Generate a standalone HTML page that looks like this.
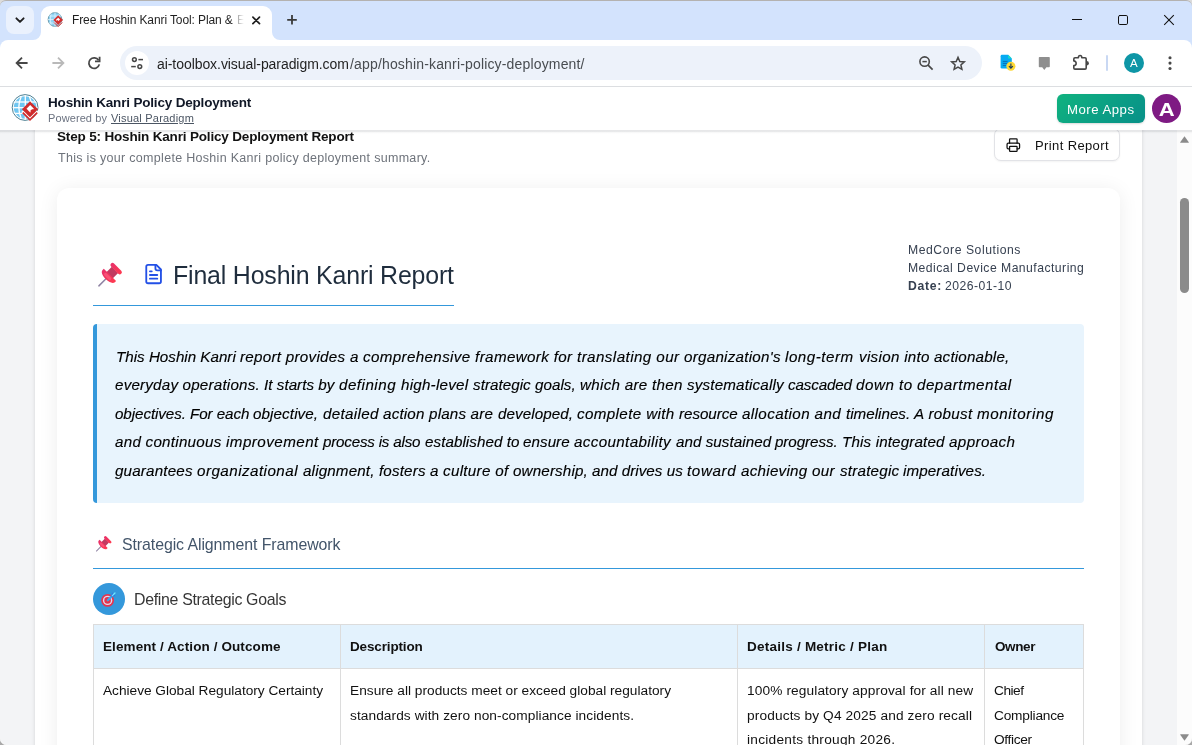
<!DOCTYPE html>
<html>
<head>
<meta charset="utf-8">
<title>Hoshin Kanri Policy Deployment</title>
<style>
*{box-sizing:border-box;margin:0;padding:0}
html,body{width:1192px;height:745px;overflow:hidden;background:#fff}
body{font-family:"Liberation Sans",sans-serif;position:relative;color:#111}
.abs{position:absolute}
.t{position:absolute;white-space:nowrap;line-height:1;will-change:transform}
svg{position:absolute;overflow:visible}
.pi{font-size:15.2px;font-style:italic;color:#000;-webkit-text-stroke:0.15px #000}
/* chrome */
#tabstrip{left:0;top:0;width:1192px;height:52px;background:#d3e3fd;border-top:1px solid #b4b2b0;border-radius:6px 6px 0 0}
.wc{position:absolute;width:7px;height:7px;background:#dcdcdc}
#tab{left:41px;top:6px;width:231px;height:34px;background:#fff;border-radius:9px 9px 0 0}
#tabmenu{left:6px;top:6px;width:28px;height:28px;border-radius:8px;background:#eaf1fd}
#toolbar{left:0;top:40px;width:1192px;height:46px;background:#fff;border-radius:8px 8px 0 0}
#omni{left:120px;top:46px;width:862px;height:34px;border-radius:17px;background:#edf2fa}
#chip{left:125px;top:51px;width:24px;height:24px;border-radius:12px;background:#fff}
#tbline{left:0;top:86px;width:1192px;height:1px;background:#dcdee1}
#tabfade{left:231px;top:10px;width:16px;height:20px;background:linear-gradient(90deg,rgba(255,255,255,0) 0,rgba(255,255,255,.25) 25%,#fff 80%)}
#sep{left:1106px;top:55px;width:2px;height:16px;background:#c9d8f3;border-radius:1px}
#avatar{left:1124px;top:53px;width:20px;height:20px;border-radius:10px;background:#0e96a6}
/* app header */
#hdr{left:0;top:87px;width:1192px;height:43px;background:#fff;z-index:5}
#hsh{left:0;top:130px;width:1192px;height:4px;z-index:5;background:linear-gradient(180deg,rgba(17,24,39,.105) 0,rgba(17,24,39,.10) 1px,rgba(17,24,39,.095) 1px,rgba(17,24,39,.09) 2px,rgba(17,24,39,.035) 2px,rgba(17,24,39,.03) 3px,rgba(17,24,39,.01) 3px,rgba(17,24,39,0) 4px)}
#more{left:1057px;top:94px;width:88px;height:29px;border-radius:6px;background:linear-gradient(135deg,#10b27f 0%,#0a9a86 70%,#089088 100%);box-shadow:0 1px 2px rgba(0,0,0,.15);z-index:6}
#uav{left:1152px;top:94px;width:29px;height:29px;border-radius:50%;background:#7e1a83;z-index:6}
/* content */
#content{left:0;top:130px;width:1177px;height:615px;background:#f3f4f6;overflow:hidden}
#cont{left:35px;top:-20px;width:1107px;height:700px;background:#fff;box-shadow:0 0 4px rgba(0,0,0,.13)}
#card{left:57px;top:58px;width:1063px;height:640px;background:#fff;border-radius:12px 12px 0 0;box-shadow:0 2px 20px rgba(0,0,0,.075)}
#printbtn{left:994px;top:128px;width:126px;height:33px;border:1px solid #e2e3e7;border-radius:7px;background:#fff;box-shadow:0 1px 2px rgba(0,0,0,.05)}
#sb{left:1177px;top:130px;width:15px;height:615px;background:#fcfcfc}
#thumb{left:1180px;top:198px;width:9px;height:95px;border-radius:4.5px;background:#8b8b8b}
#tline{left:93px;top:305px;width:361px;height:1px;background:#3498db}
#sum{left:93px;top:324px;width:991px;height:179px;background:#e8f4fd;border-left:4px solid #3498db;border-radius:4px}
#secline{left:93px;top:568px;width:991px;height:1px;background:#3498db}
#circ{left:93px;top:583px;width:32px;height:32px;border-radius:50%;background:#3498db}
#tbl{left:93px;top:624px;width:991px;height:140px;border:1px solid #dcdcdc;background:#fff}
#thead{left:94px;top:625px;width:989px;height:43px;background:#e3f2fd}
.vl{position:absolute;top:624px;width:1px;height:130px;background:#dcdcdc}
#hl{left:93px;top:668px;width:991px;height:1px;background:#dcdcdc}
</style>
</head>
<body>
<!-- Chrome tab strip -->
<div class="wc" style="left:0;top:0"></div><div class="wc" style="left:1185px;top:0"></div>
<div id="tabstrip" class="abs"></div>

<div id="tabmenu" class="abs"></div>
<div id="toolbar" class="abs"></div>
<div id="tab" class="abs"></div>
<!-- tab flares -->
<svg style="left:33px;top:32px" width="8" height="8" viewBox="0 0 8 8"><path d="M8 0 V8 H0 A8 8 0 0 0 8 0Z" fill="#fff"/></svg>
<svg style="left:272px;top:32px" width="8" height="8" viewBox="0 0 8 8"><path d="M0 0 V8 H8 A8 8 0 0 1 0 0Z" fill="#fff"/></svg>
<div id="omni" class="abs"></div>
<div id="chip" class="abs"></div>
<div id="tbline" class="abs"></div>
<!-- tab menu chevron -->
<svg style="left:0;top:0" width="1192" height="87" viewBox="0 0 1192 87" fill="none" stroke-linecap="round" stroke-linejoin="round">
  <path d="M16.4 18.3 L20 21.9 L23.6 18.3" stroke="#1f1f1f" stroke-width="1.9"/>
  <!-- favicon -->
  <g>
    <circle cx="55" cy="19.5" r="6.9" fill="#8fd3f4" stroke="#5a8da0" stroke-width="0.8"/>
    <path d="M48.3 19.5 H61.7 M55 12.7 V26.3 M51 14 Q49.5 19.5 51 25 M59 14 Q60.5 19.5 59 25 M49.3 16 H60.7 M49.3 23 H60.7" stroke="#e8f6fd" stroke-width="0.7"/>
    <path d="M58.2 15.3 L63 20.1 L58.2 24.9 L53.4 20.1Z" fill="#d32f2f" stroke="none"/>
    <path d="M54.4 22.8 L58.2 26.6 L62 22.8" stroke="#d32f2f" stroke-width="1"/>
    <path d="M58.2 17.8 L60 19.6 L58.6 21 L57.4 19.9 L56.6 20.7 L55.8 19.9Z" fill="#fff" stroke="none"/>
  </g>
  <!-- tab close -->
  <path d="M252.9 17.1 L259.5 23.7 M259.5 17.1 L252.9 23.7" stroke="#1f1f1f" stroke-width="1.7"/>
  <!-- new tab -->
  <path d="M287.2 19.8 H296.8 M292 15 V24.6" stroke="#3a3a3a" stroke-width="1.8" stroke-linecap="butt"/>
  <!-- window controls -->
  <path d="M1072 19.5 H1082" stroke="#111" stroke-width="1" stroke-linecap="butt"/>
  <rect x="1118.5" y="15.5" width="9" height="9" rx="1.3" stroke="#111" stroke-width="1"/>
  <path d="M1164.2 15.2 L1173.8 24.8 M1173.8 15.2 L1164.2 24.8" stroke="#111" stroke-width="1.05" stroke-linecap="butt"/>
  <!-- back -->
  <path d="M27.6 63 H17.2 M22 57.6 L16.6 63 L22 68.4" stroke="#474747" stroke-width="1.8" stroke-linecap="butt" stroke-linejoin="miter"/>
  <!-- forward -->
  <path d="M52.4 63 H62.8 M58 57.6 L63.4 63 L58 68.4" stroke="#b9b9b9" stroke-width="1.8" stroke-linecap="butt" stroke-linejoin="miter"/>
  <!-- reload -->
  <path d="M98.6 60.2 A5.3 5.3 0 1 0 99.3 64.4" stroke="#474747" stroke-width="1.8" stroke-linecap="butt"/>
  <path d="M99.6 56.8 V61.4 H95" stroke="#474747" stroke-width="1.8" stroke-linecap="butt" stroke-linejoin="miter"/>
  <!-- tune -->
  <circle cx="134.4" cy="59.6" r="1.9" stroke="#474747" stroke-width="1.5"/>
  <path d="M138.4 59.6 H143" stroke="#474747" stroke-width="1.5" stroke-linecap="butt"/>
  <circle cx="139.8" cy="66.6" r="1.9" stroke="#474747" stroke-width="1.5"/>
  <path d="M131.2 66.6 H135.8" stroke="#474747" stroke-width="1.5" stroke-linecap="butt"/>
  <!-- zoom -->
  <circle cx="924.6" cy="61.6" r="4.7" stroke="#474747" stroke-width="1.6"/>
  <path d="M922.4 61.6 H926.8" stroke="#474747" stroke-width="1.5" stroke-linecap="butt"/>
  <path d="M928.1 65.1 L932.6 69.6" stroke="#474747" stroke-width="1.7" stroke-linecap="butt"/>
  <!-- star -->
  <path d="M958 57.3 L959.8 61.5 L964.3 61.9 L960.9 64.9 L961.9 69.3 L958 67 L954.1 69.3 L955.1 64.9 L951.7 61.9 L956.2 61.5Z" stroke="#474747" stroke-width="1.5" stroke-linejoin="miter"/>
  <!-- ext doc icon -->
  <path d="M1002 54.8 H1008.2 L1011.8 58.4 V67.2 Q1011.8 68.6 1010.4 68.6 H1002 Q1000.6 68.6 1000.6 67.2 V56.2 Q1000.6 54.8 1002 54.8Z" fill="#06aaf2" stroke="none"/>
  <path d="M1008.2 54.8 L1011.8 58.4 H1008.2Z" fill="#19dfc6" stroke="none"/>
  <path d="M1002.8 61.4 H1007.6 M1002.8 63.4 H1007.6 M1002.8 65.4 H1006" stroke="#0a6fb5" stroke-width="1" stroke-linecap="butt"/>
  <circle cx="1010.9" cy="66.2" r="4.5" fill="#fdd835" stroke="none"/>
  <path d="M1010.9 63.6 V68 M1008.9 66.2 L1010.9 68.2 L1012.9 66.2" stroke="#1a3a5a" stroke-width="1.1" stroke-linecap="butt" stroke-linejoin="miter"/>
  <!-- speech bubble gray -->
  <path d="M1039.6 57 H1049 Q1049.8 57 1049.8 57.8 V66.4 Q1049.8 67.2 1049 67.2 H1046.4 L1044.3 69.9 L1042.2 67.2 H1039.6 Q1038.8 67.2 1038.8 66.4 V57.8 Q1038.8 57 1039.6 57Z" fill="#8e8e8e" stroke="none"/>
  <!-- puzzle -->
  <path d="M1075 57.7 H1078.4 A1.7 2.2 0 0 1 1081.8 57.7 H1085 Q1086.2 57.7 1086.2 58.9 V67.9 Q1086.2 69.1 1085 69.1 H1075 Q1073.8 69.1 1073.8 67.9 V65.6 A2.35 2.35 0 0 0 1073.8 60.9 V58.9 Q1073.8 57.7 1075 57.7Z" stroke="#474747" stroke-width="1.6" stroke-linejoin="round"/>
  <path d="M1086.6 60.9 A2.3 2.3 0 0 1 1086.6 65.5Z" fill="#474747" stroke="none"/>
  <!-- kebab -->
  <circle cx="1170" cy="57.7" r="1.55" fill="#474747"/><circle cx="1170" cy="63.1" r="1.55" fill="#474747"/><circle cx="1170" cy="68.5" r="1.55" fill="#474747"/>
</svg>
<div id="sep" class="abs"></div>
<div id="avatar" class="abs"></div>
<div class="t" style="left:1130.1px;top:57.6px;font-size:11.5px;color:#fff">A</div>


<!-- content -->
<div id="content" class="abs">
  <div id="cont" class="abs"></div>
  <div id="card" class="abs"></div>
</div>
<div id="sb" class="abs"></div>
<div id="thumb" class="abs"></div>
<svg style="left:1180px;top:136px" width="9" height="7" viewBox="0 0 9 7"><path d="M4.5 0.3 L8.8 6.2 Q9 6.8 8.3 6.8 H0.7 Q0 6.8 0.2 6.2Z" fill="#8b8b8b"/></svg>
<svg style="left:1180px;top:734px" width="9" height="7" viewBox="0 0 9 7"><path d="M4.5 6.7 L8.8 0.8 Q9 0.2 8.3 0.2 H0.7 Q0 0.2 0.2 0.8Z" fill="#8b8b8b"/></svg>

<div id="printbtn" class="abs"></div>
<div id="tline" class="abs"></div>
<div id="sum" class="abs"></div>
<div id="secline" class="abs"></div>
<div id="circ" class="abs"></div>
<div id="tbl" class="abs"></div>
<div id="thead" class="abs"></div>
<div class="vl" style="left:340px"></div>
<div class="vl" style="left:737px"></div>
<div class="vl" style="left:984px"></div>
<div id="hl" class="abs"></div>
<svg style="left:0;top:0" width="1192" height="745" viewBox="0 0 1192 745" fill="none">
  <defs>
    <linearGradient id="pg1" x1="0" y1="0" x2="1" y2="0"><stop offset="0" stop-color="#e62e6e"/><stop offset="0.55" stop-color="#ff5c80"/><stop offset="1" stop-color="#f23a5c"/></linearGradient>
    <linearGradient id="pg2" x1="0" y1="0" x2="0" y2="1"><stop offset="0" stop-color="#e8306a"/><stop offset="1" stop-color="#ff3a50"/></linearGradient>
    
  </defs>
  <!-- big pin -->
  <g transform="translate(98.4,286.4) rotate(-45)">
      <rect x="0" y="-0.75" width="12.5" height="1.5" rx="0.7" fill="#8f84a4"/>
      <rect x="15" y="-4.4" width="8.5" height="8.8" fill="#c23a60"/>
      <path d="M16.3 -8.7 V8.7 H14.6 C11.6 8.7 10.3 4 10.3 0 C10.3 -4 11.6 -8.7 14.6 -8.7Z" fill="url(#pg2)"/>
      <rect x="12" y="-5" width="3" height="9" rx="1.5" fill="#ff6a8a" opacity=".55"/>
      <rect x="23" y="-7.2" width="4.2" height="14.4" rx="2.1" fill="url(#pg2)"/>
    </g>
  <!-- small pin -->
  <g transform="translate(96.1,551.4) rotate(-45) scale(0.655)">
      <rect x="0" y="-0.75" width="12.5" height="1.5" rx="0.7" fill="#8f84a4"/>
      <rect x="15" y="-4.4" width="8.5" height="8.8" fill="#c23a60"/>
      <path d="M16.3 -8.7 V8.7 H14.6 C11.6 8.7 10.3 4 10.3 0 C10.3 -4 11.6 -8.7 14.6 -8.7Z" fill="url(#pg2)"/>
      <rect x="12" y="-5" width="3" height="9" rx="1.5" fill="#ff6a8a" opacity=".55"/>
      <rect x="23" y="-7.2" width="4.2" height="14.4" rx="2.1" fill="url(#pg2)"/>
    </g>
  <!-- doc icon -->
  <g transform="translate(142.6,263.1) scale(0.9167)" stroke="#2350e6" stroke-width="2" stroke-linecap="round" stroke-linejoin="round">
    <path d="M15 2H6a2 2 0 0 0-2 2v16a2 2 0 0 0 2 2h12a2 2 0 0 0 2-2V7Z"/><path d="M14 2v4a2 2 0 0 0 2 2h4"/><path d="M10 9H8"/><path d="M16 13H8"/><path d="M16 17H8"/>
  </g>
  <!-- printer -->
  <g transform="translate(1005.8,137.5) scale(0.627)" stroke="#111" stroke-width="2" stroke-linecap="round" stroke-linejoin="round">
    <path d="M6 18H4a2 2 0 0 1-2-2v-5a2 2 0 0 1 2-2h16a2 2 0 0 1 2 2v5a2 2 0 0 1-2 2h-2"/><path d="M6 9V3a1 1 0 0 1 1-1h10a1 1 0 0 1 1 1v6"/><rect x="6" y="14" width="12" height="8" rx="1"/>
  </g>
  <!-- target emoji -->
  <g>
    <circle cx="107.6" cy="600.4" r="6.4" fill="#e6344e"/>
    <circle cx="107.6" cy="600.4" r="4.7" fill="#dcdcf0"/>
    <circle cx="107.6" cy="600.4" r="3.3" fill="#e6344e"/>
    <circle cx="107.6" cy="600.4" r="0.9" fill="#a798a8"/>
    <path d="M108 600 L111.6 596.4" stroke="#3aa6ee" stroke-width="2.2" stroke-linecap="round"/>
    <path d="M111.2 596.8 L112 592.6 L113.4 594.6 Z" fill="#2f6fe0"/>
    <path d="M111.2 596.8 L115.4 596 L113.4 594.6 Z" fill="#2f6fe0"/>
    <path d="M112.4 595.6 L115 593" stroke="#6fe6ff" stroke-width="1.3" stroke-linecap="round"/>
  </g>
</svg>


<!-- app header -->
<div id="hdr" class="abs"></div>
<div id="hsh" class="abs"></div>
<div id="more" class="abs"></div>
<div id="uav" class="abs"></div>
<svg style="left:0;top:87px;z-index:6" width="60" height="43" viewBox="0 87 60 43" fill="none">
  <circle cx="25.1" cy="107.5" r="12.9" fill="#fff" stroke="#4d7f92" stroke-width="1"/>
  <circle cx="25.1" cy="107.5" r="11.3" fill="#6fc6f1"/>
  <g stroke="#fff" stroke-width="1.3">
    <path d="M13 107.7 H37.4"/>
    <path d="M14.5 102 H35.7"/>
    <path d="M14.5 113.4 H35.7"/>
    <path d="M25.3 95.5 V119.5"/>
    <path d="M21.3 96.3 Q16.3 107.5 21.3 118.7"/>
    <path d="M29.3 96.3 Q34.3 107.5 29.3 118.7"/>
  </g>
  <!-- red diamond -->
  <path d="M22.2 111.2 L30 118.9 L37.8 111.2" stroke="#fff" stroke-width="2.4"/>
  <path d="M30 101.3 L38.1 109.3 L30 117.3 L21.9 109.3Z" fill="#d02b2b"/>
  <path d="M22.8 112.6 L30 119.8 L37.2 112.6" stroke="#d02b2b" stroke-width="1.7"/>
  <!-- white P-ish shape -->
  <path d="M30.2 105.1 L33.9 108.8 L30.2 112.5 L26.5 108.8Z" fill="#fff"/>
  <path d="M32.3 108.9 L34.2 110.8 L32 113 L30.1 111.1Z" fill="#d02b2b"/>
</svg>
<div class="t" style="left:1159.9px;top:101.2px;font-size:18.4px;font-weight:700;color:#fff;z-index:7;transform:scaleX(1.2);transform-origin:50% 50%">A</div>


<div class="t" id="t-tabt" style="left:72.20px;top:13.74px;font-size:12px;color:#1f1f1f;letter-spacing:-0.103px;">Free Hoshin Kanri Tool: Plan &amp;</div>
<div class="t" id="t-url1" style="left:157.00px;top:56.55px;font-size:14px;color:#1f1f1f;letter-spacing:-0.065px;">ai-toolbox.visual-paradigm.com</div>
<div class="t" id="t-url2" style="left:350.00px;top:56.55px;font-size:14px;color:#484c50;letter-spacing:0.163px;">/app/hoshin-kanri-policy-deployment/</div>
<div class="t" id="t-h1" style="left:47.90px;top:95.77px;font-size:13.5px;color:#111827;letter-spacing:-0.182px;font-weight:700;z-index:6;">Hoshin Kanri Policy Deployment</div>
<div class="t" id="t-h2a" style="left:47.90px;top:112.99px;font-size:11px;color:#6b7280;letter-spacing:0.09px;z-index:6;">Powered by</div>
<div class="t" id="t-h2b" style="left:110.50px;top:112.99px;font-size:11px;color:#4b5563;letter-spacing:0.207px;z-index:6;text-decoration:underline;">Visual Paradigm</div>
<div class="t" id="t-more" style="left:1066.50px;top:102.83px;font-size:13.2px;color:#fff;letter-spacing:0.5px;z-index:7;">More Apps</div>
<div class="t" id="t-s1" style="left:56.50px;top:130.07px;font-size:13.5px;color:#111;letter-spacing:-0.17px;font-weight:700;">Step 5: Hoshin Kanri Policy Deployment Report</div>
<div class="t" id="t-s2" style="left:57.50px;top:151.52px;font-size:12.5px;color:#6e737b;letter-spacing:0.302px;">This is your complete Hoshin Kanri policy deployment summary.</div>
<div class="t" id="t-pr" style="left:1034.60px;top:138.90px;font-size:13px;color:#111;letter-spacing:0.381px;">Print Report</div>
<div class="t" id="t-ttl" style="left:173.10px;top:263.32px;font-size:24.9px;color:#1f2d3d;letter-spacing:-0.167px;">Final Hoshin Kanri Report</div>
<div class="t" id="t-m1" style="left:908.00px;top:243.87px;font-size:12.2px;color:#374151;letter-spacing:0.55px;">MedCore Solutions</div>
<div class="t" id="t-m2" style="left:908.00px;top:261.97px;font-size:12.2px;color:#374151;letter-spacing:0.466px;">Medical Device Manufacturing</div>
<div class="t" id="t-m3a" style="left:908.00px;top:279.87px;font-size:12.2px;color:#374151;letter-spacing:0.7px;font-weight:700;">Date:</div>
<div class="t" id="t-m3b" style="left:945.30px;top:279.87px;font-size:12.2px;color:#374151;letter-spacing:0.478px;">2026-01-10</div>
<div class="t" id="t-sec" style="left:121.60px;top:537.04px;font-size:15.9px;color:#43556a;letter-spacing:-0.083px;">Strategic Alignment Framework</div>
<div class="t" id="t-def" style="left:133.70px;top:592.04px;font-size:15.9px;color:#363636;letter-spacing:-0.315px;">Define Strategic Goals</div>
<div class="t" id="t-th1" style="left:102.90px;top:639.57px;font-size:13.5px;color:#111;letter-spacing:0.1px;font-weight:700;">Element / Action / Outcome</div>
<div class="t" id="t-th2" style="left:349.50px;top:639.57px;font-size:13.5px;color:#111;letter-spacing:-0.15px;font-weight:700;">Description</div>
<div class="t" id="t-th3" style="left:747.10px;top:639.57px;font-size:13.5px;color:#111;letter-spacing:0.236px;font-weight:700;">Details / Metric / Plan</div>
<div class="t" id="t-th4" style="left:995.20px;top:639.57px;font-size:13.5px;color:#111;letter-spacing:-0.4px;font-weight:700;">Owner</div>
<div class="t" id="t-r1" style="left:103.10px;top:683.60px;font-size:13.7px;color:#111;letter-spacing:-0.017px;">Achieve Global Regulatory Certainty</div>
<div class="t" id="t-r2a" style="left:349.50px;top:683.60px;font-size:13.7px;color:#111;letter-spacing:0.014px;">Ensure all products meet or exceed global regulatory</div>
<div class="t" id="t-r2b" style="left:349.50px;top:709.10px;font-size:13.7px;color:#111;letter-spacing:0.074px;">standards with zero non-compliance incidents.</div>
<div class="t" id="t-r3a" style="left:747.10px;top:683.60px;font-size:13.7px;color:#111;letter-spacing:0.114px;">100% regulatory approval for all new</div>
<div class="t" id="t-r3b" style="left:747.10px;top:709.10px;font-size:13.7px;color:#111;letter-spacing:0.129px;">products by Q4 2025 and zero recall</div>
<div class="t" id="t-r3c" style="left:747.10px;top:733.20px;font-size:13.7px;color:#111;letter-spacing:0.258px;">incidents through 2026.</div>
<div class="t" id="t-r4a" style="left:994.20px;top:683.60px;font-size:13.7px;color:#111;letter-spacing:-0.5px;">Chief</div>
<div class="t" id="t-r4b" style="left:994.20px;top:709.10px;font-size:13.7px;color:#111;letter-spacing:-0.201px;">Compliance</div>
<div class="t" id="t-r4c" style="left:994.20px;top:733.20px;font-size:13.7px;color:#111;letter-spacing:-0.317px;">Officer</div>
<div class="t pi" id="t-p1-0" style="left:115.80px;top:348.93px;letter-spacing:-0.005px">This Hoshin Kanri</div>
<div class="t pi" id="t-p1-1" style="left:239.80px;top:348.93px;letter-spacing:0.273px">report provides a</div>
<div class="t pi" id="t-p1-2" style="left:362.90px;top:348.93px;letter-spacing:0.351px">comprehensive framework for</div>
<div class="t pi" id="t-p1-3" style="left:577.00px;top:348.93px;letter-spacing:0.421px">translating our</div>
<div class="t pi" id="t-p1-4" style="left:684.20px;top:348.93px;letter-spacing:0.249px">organization's</div>
<div class="t pi" id="t-p1-5" style="left:785.40px;top:348.93px;letter-spacing:0.512px">long-term</div>
<div class="t pi" id="t-p1-6" style="left:858.90px;top:348.93px;letter-spacing:0.303px">vision into</div>
<div class="t pi" id="t-p1-7" style="left:934.30px;top:348.93px;letter-spacing:0.176px">actionable,</div>
<div class="t pi" id="t-p2-0" style="left:115.00px;top:377.43px;letter-spacing:0.194px">everyday operations.</div>
<div class="t pi" id="t-p2-1" style="left:264.30px;top:377.43px;letter-spacing:0.032px">It starts by</div>
<div class="t pi" id="t-p2-2" style="left:339.00px;top:377.43px;letter-spacing:0.486px">defining</div>
<div class="t pi" id="t-p2-3" style="left:400.80px;top:377.43px;letter-spacing:0.224px">high-level</div>
<div class="t pi" id="t-p2-4" style="left:472.50px;top:377.43px;letter-spacing:0.037px">strategic goals,</div>
<div class="t pi" id="t-p2-5" style="left:579.50px;top:377.43px;letter-spacing:0.28px">which are then</div>
<div class="t pi" id="t-p2-6" style="left:686.70px;top:377.43px;letter-spacing:0.163px">systematically</div>
<div class="t pi" id="t-p2-7" style="left:787.90px;top:377.43px;letter-spacing:-0.137px">cascaded</div>
<div class="t pi" id="t-p2-8" style="left:855.90px;top:377.43px;letter-spacing:0.51px">down to</div>
<div class="t pi" id="t-p2-9" style="left:917.40px;top:377.43px;letter-spacing:0.487px">departmental</div>
<div class="t pi" id="t-p3-0" style="left:115.00px;top:405.93px;letter-spacing:-0.082px">objectives.</div>
<div class="t pi" id="t-p3-1" style="left:190.00px;top:405.93px;letter-spacing:-0.084px">For each</div>
<div class="t pi" id="t-p3-2" style="left:253.40px;top:405.93px;letter-spacing:0.101px">objective,</div>
<div class="t pi" id="t-p3-3" style="left:322.90px;top:405.93px;letter-spacing:0.32px">detailed</div>
<div class="t pi" id="t-p3-4" style="left:383.20px;top:405.93px;letter-spacing:0.179px">action plans are</div>
<div class="t pi" id="t-p3-5" style="left:497.70px;top:405.93px;letter-spacing:0.068px">developed,</div>
<div class="t pi" id="t-p3-6" style="left:577.00px;top:405.93px;letter-spacing:0.366px">complete with</div>
<div class="t pi" id="t-p3-7" style="left:679.20px;top:405.93px;letter-spacing:-0.046px">resource</div>
<div class="t pi" id="t-p3-8" style="left:742.10px;top:405.93px;letter-spacing:0.383px">allocation and</div>
<div class="t pi" id="t-p3-9" style="left:845.80px;top:405.93px;letter-spacing:0.002px">timelines.</div>
<div class="t pi" id="t-p3-10" style="left:914.20px;top:405.93px;letter-spacing:0.309px">A robust</div>
<div class="t pi" id="t-p3-11" style="left:977.20px;top:405.93px;letter-spacing:0.608px">monitoring</div>
<div class="t pi" id="t-p4-0" style="left:115.00px;top:434.43px;letter-spacing:0.25px">and continuous</div>
<div class="t pi" id="t-p4-1" style="left:226.00px;top:434.43px;letter-spacing:0.449px">improvement</div>
<div class="t pi" id="t-p4-2" style="left:323.40px;top:434.43px;letter-spacing:-0.211px">process is also</div>
<div class="t pi" id="t-p4-3" style="left:424.70px;top:434.43px;letter-spacing:0.05px">established to</div>
<div class="t pi" id="t-p4-4" style="left:523.40px;top:434.43px;letter-spacing:0.047px">ensure</div>
<div class="t pi" id="t-p4-5" style="left:574.40px;top:434.43px;letter-spacing:0.35px">accountability</div>
<div class="t pi" id="t-p4-6" style="left:675.90px;top:434.43px;letter-spacing:0.043px">and sustained</div>
<div class="t pi" id="t-p4-7" style="left:775.30px;top:434.43px;letter-spacing:-0.083px">progress.</div>
<div class="t pi" id="t-p4-8" style="left:842.00px;top:434.43px;letter-spacing:0.145px">This integrated</div>
<div class="t pi" id="t-p4-9" style="left:949.00px;top:434.43px;letter-spacing:0.382px">approach</div>
<div class="t pi" id="t-p5-0" style="left:115.00px;top:462.93px;letter-spacing:0.171px">guarantees</div>
<div class="t pi" id="t-p5-1" style="left:197.10px;top:462.93px;letter-spacing:0.46px">organizational</div>
<div class="t pi" id="t-p5-2" style="left:302.80px;top:462.93px;letter-spacing:0.154px">alignment, fosters a</div>
<div class="t pi" id="t-p5-3" style="left:442.80px;top:462.93px;letter-spacing:0.3px">culture of</div>
<div class="t pi" id="t-p5-4" style="left:512.80px;top:462.93px;letter-spacing:0.148px">ownership,</div>
<div class="t pi" id="t-p5-5" style="left:592.10px;top:462.93px;letter-spacing:0.038px">and drives us</div>
<div class="t pi" id="t-p5-6" style="left:687.20px;top:462.93px;letter-spacing:0.613px">toward</div>
<div class="t pi" id="t-p5-7" style="left:741.30px;top:462.93px;letter-spacing:0.26px">achieving our</div>
<div class="t pi" id="t-p5-8" style="left:839.50px;top:462.93px;letter-spacing:0.217px">strategic</div>
<div class="t pi" id="t-p5-9" style="left:903.30px;top:462.93px;letter-spacing:0.11px">imperatives.</div>
<div class="t" style="left:236.5px;top:13.7px;font-size:12px;color:#555">E</div>
<div id="tabfade" class="abs"></div>
<svg style="left:0;top:738px;z-index:9" width="7" height="7" viewBox="0 0 7 7"><path d="M0 0 A7 7 0 0 0 7 7 H0Z" fill="#a9a9a9"/><path d="M0 0 A7 7 0 0 0 7 7" fill="none" stroke="#fff" stroke-width="1" opacity=".7"/></svg>
<svg style="left:1185px;top:738px;z-index:9" width="7" height="7" viewBox="0 0 7 7"><path d="M7 0 A7 7 0 0 1 0 7 H7Z" fill="#a9a9a9"/><path d="M7 0 A7 7 0 0 1 0 7" fill="none" stroke="#fff" stroke-width="1" opacity=".7"/></svg>
</body>
</html>
